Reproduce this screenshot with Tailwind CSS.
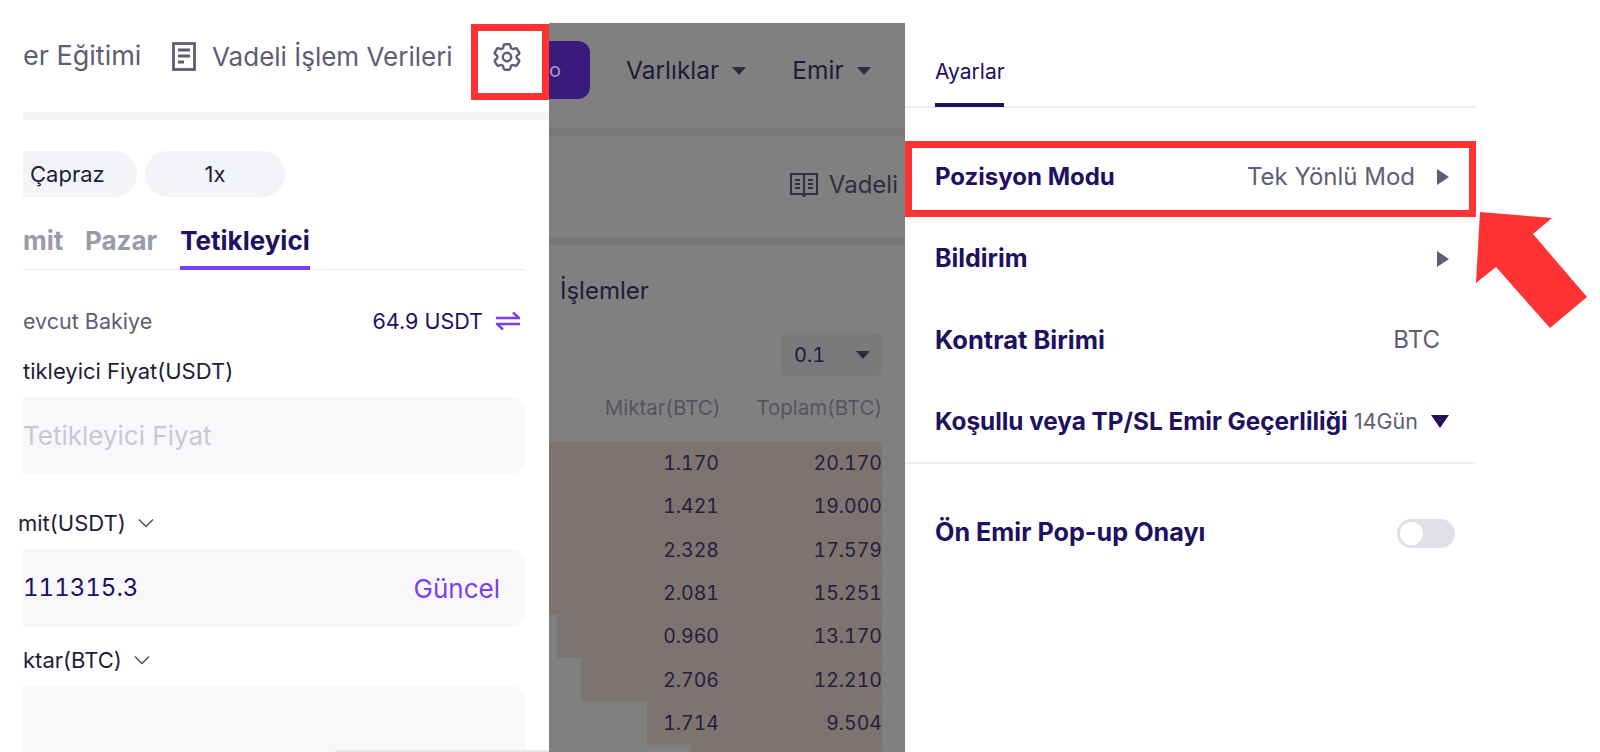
<!DOCTYPE html>
<html lang="tr">
<head>
  <meta charset="UTF-8" />
  <title>Ayarlar</title>
  <script src="https://cdn.jsdelivr.net/npm/@tailwindcss/browser@4"></script>
</head>
<body class="bg-white">
  <div class="relative flex w-[1600px] h-[752px] overflow-hidden bg-white font-['Inter',sans-serif]">

    <!-- Left panel -->
    <section class="w-[549px] h-full pl-[23px] flex flex-col shrink-0 overflow-hidden">
      <div class="h-[112px] shrink-0 flex items-center text-[26px] text-[#5e5d75] whitespace-nowrap">
        <span class="w-[149px] text-[27px]">er Eğitimi</span>
        <svg class="w-[24px] h-[29px]" viewBox="0 0 24 29" fill="none" stroke="#5e5d75" stroke-width="2.8">
          <rect x="1.5" y="1.5" width="21" height="26" />
          <path d="M6 8h12M6 14h12M6 20h6" />
        </svg>
        <span class="ml-[16px]">Vadeli İşlem Verileri</span>
      </div>
      <div class="h-2 shrink-0 bg-[#f4f4f7]"></div>

      <div class="mt-[31px] flex gap-[8px] h-[46px] shrink-0 text-[22px] text-[#1f1d38]">
        <div class="w-[114px] rounded-r-[23px] bg-[#f3f4f8] flex items-center pl-[7px]">Çapraz</div>
        <div class="w-[140px] rounded-[23px] bg-[#f3f4f8] flex items-center justify-center">1x</div>
      </div>

      <div class="w-[502px] mt-[21px] h-[52px] shrink-0 border-b border-[#ececf0] flex items-start gap-[23px] text-[26px] font-bold text-[#9a99ad]">
        <span class="w-[39px] h-[52px] leading-[46px]">mit</span>
        <span class="h-[52px] leading-[46px]">Pazar</span>
        <span class="h-[52px] leading-[46px] text-[#21105f] border-b-4 border-[#7b3ff2]">Tetikleyici</span>
      </div>

      <div class="w-[497px] mt-[37px] flex items-center justify-between text-[21.5px] h-[28px] shrink-0">
        <span class="text-[#5e5d75]">evcut Bakiye</span>
        <span class="flex items-center gap-[13px] text-[#21105f]">64.9 USDT
          <svg class="w-[24px] h-[20px]" viewBox="0 0 24 20" fill="none" stroke="#7b3ff2" stroke-width="2.4">
            <path d="M0 7h23L17 1.5M24 13H1l6 5.5" />
          </svg>
        </span>
      </div>
      <div class="mt-[22px] h-[28px] shrink-0 flex items-center text-[22px] text-[#1f1d38]">tikleyici Fiyat(USDT)</div>
      <div class="w-[502px] mt-[12px] h-[77px] shrink-0 rounded-r-[14px] bg-[#f8f8fb] flex items-center text-[26px] text-[#c9c7d6]">Tetikleyici Fiyat</div>

      <div class="mt-[35px] h-[28px] shrink-0 flex items-center gap-[12px] text-[22px] text-[#1f1d38]">
        <span class="-ml-[5px]">mit(USDT)</span>
        <svg class="w-[16px] h-[10px]" viewBox="0 0 16 10" fill="none" stroke="#4b4a63" stroke-width="1.4"><path d="M1 1.5l7 7 7-7" /></svg>
      </div>
      <div class="w-[502px] mt-[12px] h-[78px] shrink-0 rounded-r-[14px] bg-[#f8f8fb] flex items-center justify-between pr-[25px] text-[26px]">
        <span class="text-[#21105f] tabular-nums text-[24px]">111315.3</span>
        <span class="text-[#7b3ff2]">Güncel</span>
      </div>

      <div class="mt-[19px] h-[28px] shrink-0 flex items-center gap-[12px] text-[22px] text-[#1f1d38]">ktar(BTC)
        <svg class="w-[16px] h-[10px]" viewBox="0 0 16 10" fill="none" stroke="#4b4a63" stroke-width="1.4"><path d="M1 1.5l7 7 7-7" /></svg>
      </div>
      <div class="w-[502px] mt-[12px] h-[66px] rounded-tr-[14px] bg-[#f8f8fb] shrink-0"></div>
    </section>

    <!-- Dimmed middle panel -->
    <section class="w-[356px] mt-[23px] h-[729px] shrink-0 bg-[#808080] text-[#1e1b3a] overflow-hidden flex flex-col">
      <div class="h-[105px] shrink-0 pt-[18px] flex items-start">
        <div class="w-[41px] h-[58px] rounded-r-[12px] bg-[#3a1a7c] text-[#a79ac4] text-[20px] leading-[58px]">o</div>
        <div class="ml-[36px] h-[58px] flex items-center text-[24.5px]">
          Varlıklar
          <span class="ml-[13px] mt-[2px] border-x-[7px] border-t-[8px] border-x-transparent border-t-[#2b2a3f]"></span>
          <span class="ml-[46px]">Emir</span>
          <span class="ml-[13px] mt-[2px] border-x-[7px] border-t-[8px] border-x-transparent border-t-[#2b2a3f]"></span>
        </div>
      </div>
      <div class="h-2 shrink-0 bg-[#77787a]"></div>

      <div class="h-[101px] shrink-0 pb-[4px] pr-[7px] flex items-center justify-end text-[24px] text-[#2f2e42]">
        <svg class="w-[28px] h-[26px]" viewBox="0 0 28 26" fill="none" stroke="#2f2e42" stroke-width="2">
          <path d="M1 2h26v20H16l-2 2-2-2H1zM14 2v20M5 8h5M5 12h5M5 16h5M18 8h5M18 12h5M18 16h5" />
        </svg>
        <span class="ml-[11px]">Vadeli</span>
      </div>
      <div class="h-2 shrink-0 bg-[#77787a]"></div>

      <div class="h-[72px] shrink-0 border-b border-[#7a7a7a] pl-[11px] pt-[20px] flex items-center text-[24px]">İşlemler</div>

      <div class="mt-[16px] shrink-0 pr-[23px] flex justify-end">
        <div class="w-[101px] h-[43px] rounded-[6px] bg-[#7a7a7a] pl-[13px] pr-[12px] flex items-center justify-between text-[20px] tabular-nums">
          0.1
          <span class="border-x-[7px] border-t-[8px] border-x-transparent border-t-[#2b2a3f]"></span>
        </div>
      </div>

      <div class="mt-[20px] h-[24px] shrink-0 pr-[23px] flex items-center justify-end text-[20.5px] text-[#55545f] whitespace-nowrap">
        <span>Miktar(BTC)</span>
        <span class="ml-[36px]">Toplam(BTC)</span>
      </div>

      <div class="mt-[22px] shrink-0 flex flex-col w-[333px] text-[19.5px] text-[#23203c] tabular-nums">
        <div class="relative h-[43.3px] flex items-center justify-end">
          <div class="absolute inset-y-0 right-0 bg-[#7d7371] border-b border-[#7c7977]" style="width:333px"></div>
          <span class="relative w-[120px] text-right">1.170</span><span class="relative w-[163px] text-right">20.170</span>
        </div>
        <div class="relative h-[43.3px] flex items-center justify-end">
          <div class="absolute inset-y-0 right-0 bg-[#7d7371] border-b border-[#7c7977]" style="width:333px"></div>
          <span class="relative w-[120px] text-right">1.421</span><span class="relative w-[163px] text-right">19.000</span>
        </div>
        <div class="relative h-[43.3px] flex items-center justify-end">
          <div class="absolute inset-y-0 right-0 bg-[#7d7371] border-b border-[#7c7977]" style="width:333px"></div>
          <span class="relative w-[120px] text-right">2.328</span><span class="relative w-[163px] text-right">17.579</span>
        </div>
        <div class="relative h-[43.3px] flex items-center justify-end">
          <div class="absolute inset-y-0 right-0 bg-[#7d7371] border-b border-[#7c7977]" style="width:333px"></div>
          <span class="relative w-[120px] text-right">2.081</span><span class="relative w-[163px] text-right">15.251</span>
        </div>
        <div class="relative h-[43.3px] flex items-center justify-end">
          <div class="absolute inset-y-0 right-0 bg-[#7d7371] border-b border-[#7c7977]" style="width:325px"></div>
          <span class="relative w-[120px] text-right">0.960</span><span class="relative w-[163px] text-right">13.170</span>
        </div>
        <div class="relative h-[43.3px] flex items-center justify-end">
          <div class="absolute inset-y-0 right-0 bg-[#7d7371] border-b border-[#7c7977]" style="width:301px"></div>
          <span class="relative w-[120px] text-right">2.706</span><span class="relative w-[163px] text-right">12.210</span>
        </div>
        <div class="relative h-[43.3px] flex items-center justify-end">
          <div class="absolute inset-y-0 right-0 bg-[#7d7371] border-b border-[#7c7977]" style="width:235px"></div>
          <span class="relative w-[120px] text-right">1.714</span><span class="relative w-[163px] text-right">9.504</span>
        </div>
        <div class="relative h-[43.3px]">
          <div class="absolute inset-y-0 right-0 bg-[#7d7371]" style="width:192px"></div>
        </div>
      </div>
    </section>

    <!-- Settings panel -->
    <section class="w-[571px] shrink-0 flex flex-col text-[#21105f]">
      <div class="h-[108px] border-b-2 border-[#eeeef2] pl-[30px]">
        <div class="w-[69px] h-[107px] pt-[59px] border-b-4 border-[#21105f] text-[21px] leading-[26px] whitespace-nowrap">Ayarlar</div>
      </div>
      <div class="mt-[31px] h-[76px] pl-[30px] pr-[27px] flex items-center justify-between text-[24px] font-bold">
        Pozisyon Modu
        <span class="flex items-center gap-[22px] text-[24px] font-normal text-[#5e5d75]">Tek Yönlü Mod
          <span class="border-y-[8px] border-l-[12px] border-y-transparent border-l-[#5e5d75]"></span>
        </span>
      </div>
      <div class="mt-[6px] h-[76px] pl-[30px] pr-[27px] flex items-center justify-between text-[25px] font-bold">
        Bildirim
        <span class="border-y-[8px] border-l-[12px] border-y-transparent border-l-[#5e5d75]"></span>
      </div>
      <div class="mt-[5px] h-[76px] pl-[30px] pr-[36px] flex items-center justify-between text-[25.5px] font-bold">
        Kontrat Birimi
        <span class="text-[24px] font-normal text-[#5e5d75]">BTC</span>
      </div>
      <div class="mt-[5px] h-[76px] pl-[30px] pr-[27px] flex items-center justify-between text-[24.3px] font-bold whitespace-nowrap">
        Koşullu veya TP/SL Emir Geçerliliği
        <span class="flex items-center gap-[13px] text-[21.5px] font-normal text-[#5e5d75]">14Gün
          <span class="border-x-[9px] border-t-[13px] border-x-transparent border-t-[#24105e]"></span>
        </span>
      </div>
      <div class="mt-[3px] h-[2px] bg-[#eeeef2]"></div>
      <div class="mt-[31px] h-[76px] pl-[30px] pr-[21px] flex items-center justify-between text-[25.2px] font-bold">
        Ön Emir Pop-up Onayı
        <div class="w-[58px] h-[29px] rounded-full bg-[#e0e0e8] p-[3px]">
          <div class="w-[23px] h-[23px] rounded-full bg-white"></div>
        </div>
      </div>
    </section>

    <!-- Annotations drawn over the page -->
    <div class="absolute left-[471px] top-[24px] w-[78px] h-[76px] border-[7px] border-[#ff3333]"></div>
    <div class="absolute left-[905px] top-[141px] w-[571px] h-[76px] border-[7px] border-[#ff3333]"></div>
    <svg class="absolute left-0 top-0 w-[1600px] h-[752px] pointer-events-none" viewBox="0 0 1600 752">
      <polygon fill="#ff3333" points="1480,212 1552,218 1533,234 1587,297 1550,328 1496,267 1476,283" />
    </svg>
    <div class="absolute left-[335px] top-[750px] w-[214px] h-[2px] bg-[#e8e8ea]"></div>
    <svg class="absolute left-[490px] top-[40px] w-[34px] h-[34px]" viewBox="0 0 24 24" fill="none" stroke="#5e5d75" stroke-width="1.7" stroke-linecap="round" stroke-linejoin="round">
      <path d="M9.594 3.94c.09-.542.56-.94 1.11-.94h2.593c.55 0 1.02.398 1.11.94l.213 1.281c.063.374.313.686.645.87.074.04.147.083.22.127.325.196.72.257 1.075.124l1.217-.456a1.125 1.125 0 0 1 1.37.49l1.296 2.247a1.125 1.125 0 0 1-.26 1.431l-1.003.827c-.293.241-.438.613-.43.992a7.723 7.723 0 0 1 0 .255c-.008.378.137.75.43.991l1.004.827c.424.35.534.955.26 1.43l-1.298 2.247a1.125 1.125 0 0 1-1.369.491l-1.217-.456c-.355-.133-.75-.072-1.076.124a6.47 6.47 0 0 1-.22.128c-.331.183-.581.495-.644.869l-.213 1.281c-.09.543-.56.94-1.11.94h-2.594c-.55 0-1.019-.398-1.11-.94l-.213-1.281c-.062-.374-.312-.686-.644-.87a6.52 6.52 0 0 1-.22-.127c-.325-.196-.72-.257-1.076-.124l-1.217.456a1.125 1.125 0 0 1-1.369-.49l-1.297-2.247a1.125 1.125 0 0 1 .26-1.431l1.004-.827c.292-.24.437-.613.43-.991a6.932 6.932 0 0 1 0-.255c.007-.38-.138-.751-.43-.992l-1.004-.827a1.125 1.125 0 0 1-.26-1.43l1.297-2.247a1.125 1.125 0 0 1 1.37-.491l1.216.456c.356.133.751.072 1.076-.124.072-.044.146-.086.22-.128.332-.183.582-.495.644-.869l.214-1.28Z" />
      <circle cx="12" cy="12" r="3" />
    </svg>
  </div>
</body>
</html>
